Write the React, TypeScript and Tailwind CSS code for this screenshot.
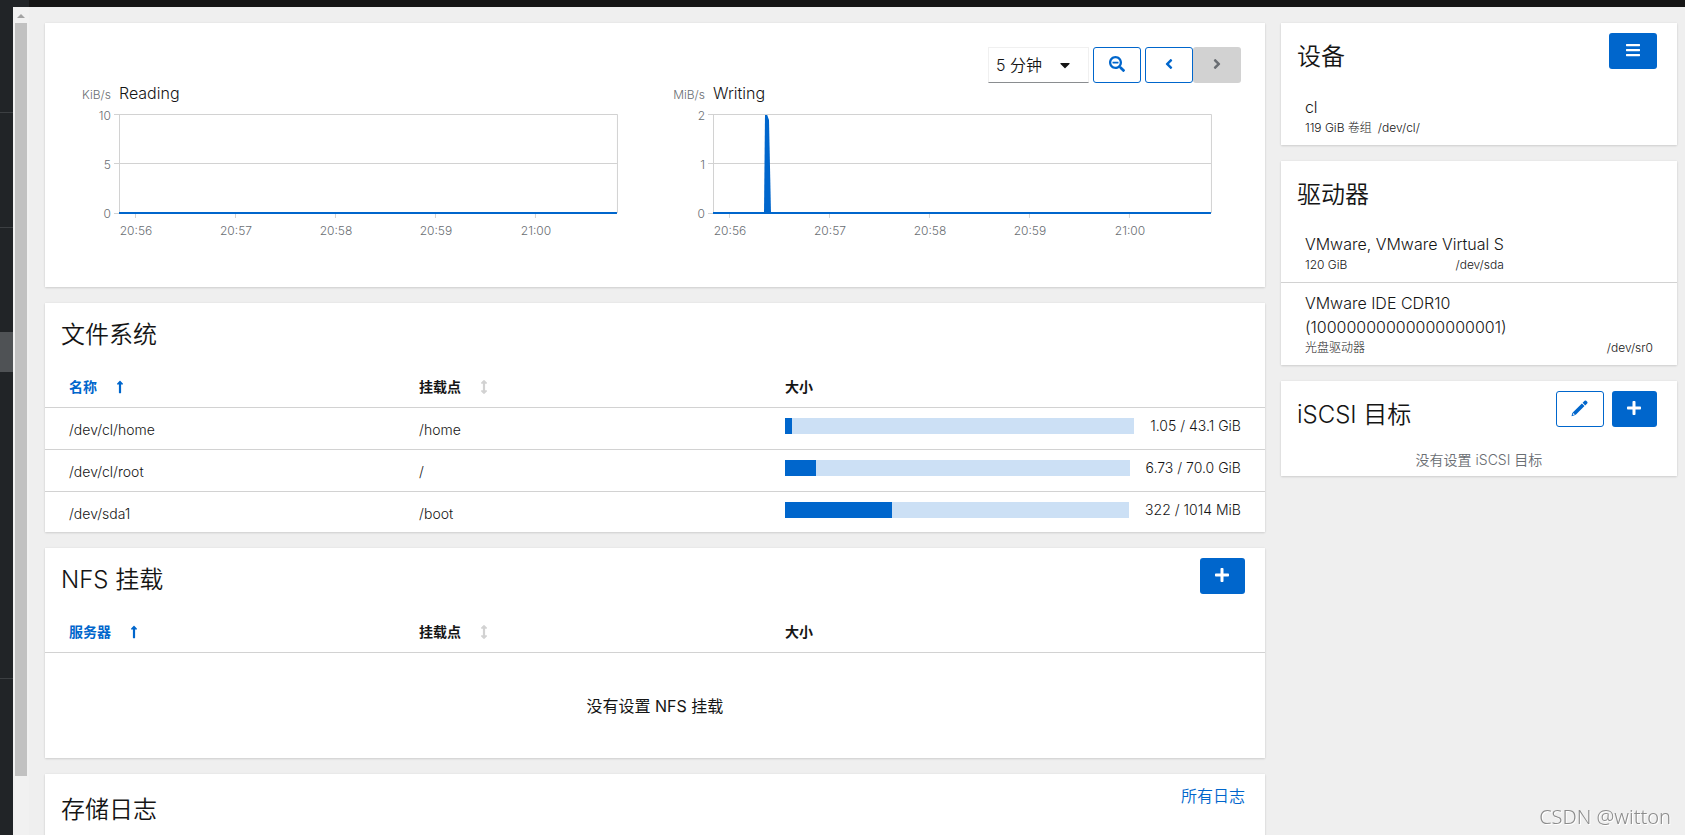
import type { ReactNode } from 'react';
import clsx from 'clsx';
import {
  FaAngleLeft,
  FaAngleRight,
  FaArrowsAltV,
  FaBars,
  FaCaretDown,
  FaLongArrowAltUp,
  FaPlus,
  FaSearchMinus,
} from 'react-icons/fa';

const filesystems = [
  { name: '/dev/cl/home', mount: '/home', size: '1.05 / 43.1 GiB', percent: 2 },
  { name: '/dev/cl/root', mount: '/', size: '6.73 / 70.0 GiB', percent: 9 },
  { name: '/dev/sda1', mount: '/boot', size: '322 / 1014 MiB', percent: 31 },
];

const times = ['20:56', '20:57', '20:58', '20:59', '21:00'];

interface CardProps {
  title?: string;
  titleClass?: string;
  actions?: ReactNode;
  children?: ReactNode;
}

function Card({ title, titleClass = 'my-4', actions, children }: CardProps) {
  return (
    <section className="bg-white shadow-[0_1px_2px_rgba(3,3,3,0.12),0_0_2px_rgba(3,3,3,0.06)]">
      {title && (
        <div className="flex items-start justify-between pl-4 pr-5">
          <h2 className={clsx('text-2xl leading-8', titleClass)}>{title}</h2>
          {actions && <div className="flex gap-2 pb-[18px] pt-[10px]">{actions}</div>}
        </div>
      )}
      {children}
    </section>
  );
}

interface ButtonProps {
  label: string;
  primary?: boolean;
  disabled?: boolean;
  className?: string;
  children: ReactNode;
}

function Button({ label, primary, disabled, className, children }: ButtonProps) {
  return (
    <button
      type="button"
      aria-label={label}
      disabled={disabled}
      className={clsx(
        'flex h-9 items-center justify-center rounded-[3px] pb-0.5 text-base',
        disabled && 'bg-[#d2d2d2] text-[#6a6e73]',
        !disabled && primary && 'cursor-pointer bg-[#0066cc] text-white',
        !disabled && !primary && 'cursor-pointer border border-[#0066cc] bg-white text-[#0066cc]',
        className ?? 'w-12',
      )}
    >
      {children}
    </button>
  );
}

function PencilIcon() {
  return (
    <svg viewBox="0 0 17 17" className="h-[17px] w-[17px]" fill="currentColor">
      <path d="M11.600 2.800L13.600 0.800Q14.400 0 15.200 0.800L16.200 1.800Q17 2.600 16.200 3.400L14.200 5.400z" />
      <path
        fillRule="evenodd"
        d="M10.900 3.500L13.500 6.100L5 14.600Q4.400 15.200 0.500 16.200Q1 12.800 2 12.200zM2.400 13.100L1.700 15.100L3.900 14.400z"
      />
    </svg>
  );
}

interface ChartProps {
  title: string;
  unit: string;
  ticks: string[];
  spike?: boolean;
}

function Chart({ title, unit, ticks, spike }: ChartProps) {
  return (
    <svg viewBox="0 0 594 176" className="block w-full" role="img" aria-label={title}>
      <text x="50" y="16" textAnchor="end" className="fill-[#6a6e73] text-xs">
        {unit}
      </text>
      <text x="58" y="16" className="fill-[#151515] text-base">
        {title}
      </text>
      <g stroke="#d2d2d2" fill="none">
        <path d="M53 31.5H556.5V130M53 80.5H556M53 130.5H556M58.5 31V130" />
        {times.map((time, i) => (
          <path key={time} d={`M${74.5 + i * 100} 131v4`} />
        ))}
      </g>
      {ticks.map((tick, i) => (
        <text key={tick} x="50" y={37 + i * 49} textAnchor="end" className="fill-[#6a6e73] text-xs">
          {tick}
        </text>
      ))}
      {times.map((time, i) => (
        <text key={time} x={75 + i * 100} y="152" textAnchor="middle" className="fill-[#6a6e73] text-xs">
          {time}
        </text>
      ))}
      {spike && <path d="M109 130L110 32h2.200L114 37L116 130z" fill="#0066cc" />}
      <path d="M58 130H556" stroke="#0066cc" strokeWidth="2" />
    </svg>
  );
}

function TableHead({ first }: { first: string }) {
  return (
    <thead>
      <tr className="h-[41px] border-b border-[#d2d2d2] text-left align-middle text-sm">
        <th className="w-[28.7%] pl-6 font-bold text-[#0066cc]">
          <button type="button" className="flex cursor-pointer items-center gap-4">
            {first}
            <FaLongArrowAltUp size={14} />
          </button>
        </th>
        <th className="w-[30%] pl-6 font-bold">
          <button type="button" className="flex cursor-pointer items-center gap-4">
            挂载点
            <FaArrowsAltV size={14} className="text-[#d2d2d2]" />
          </button>
        </th>
        <th className="pl-6 font-bold">大小</th>
      </tr>
    </thead>
  );
}

interface DeviceProps {
  name: string;
  info: string;
  path: string;
}

function Device({ name, info, path }: DeviceProps) {
  return (
    <li className="border-b border-[#d2d2d2] px-6 py-2 last:border-b-0">
      <div className="w-fit">
        <div className="text-base leading-6">{name}</div>
        <div className="flex justify-between gap-1.5 text-xs leading-[18px]">
          <span>{info}</span>
          <span>{path}</span>
        </div>
      </div>
    </li>
  );
}

export default function App() {
  return (
    <div className="flex h-screen flex-col overflow-hidden bg-[#efefef] font-['Inter','Noto_Sans_CJK_SC',sans-serif] font-[350] text-[#151515]">
      <header className="flex h-[7px] shrink-0 bg-[#151515]">
        <div className="w-[29px] bg-[#212427]" />
      </header>

      <div className="flex min-h-0 flex-1">
        {/* navigation edge */}
        <nav className="flex w-[13px] shrink-0 flex-col bg-[#212427]">
          <div className="h-[106px] border-b border-[#3c3f42]" />
          <div className="h-[115px] border-b border-[#3c3f42]" />
          <div className="mt-[104px] h-10 bg-[#4f5255]" />
          <div className="h-[307px] border-b border-[#3c3f42]" />
        </nav>

        {/* scrollbar */}
        <div className="flex w-4 shrink-0 flex-col bg-[#f1f1f1] px-0.5">
          <svg viewBox="0 0 12 16" className="h-4 w-3 shrink-0">
            <path d="M2 11L6 7L10 11z" fill="#a3a3a3" />
          </svg>
          <div className="h-[91%] bg-[#c1c1c1]" />
        </div>

        <main className="grid flex-1 grid-cols-[minmax(0,77fr)_minmax(0,25fr)] items-start gap-4 pl-4 pr-2 pt-4">
          <div className="flex flex-col gap-4">
            <Card>
              <div className="flex justify-end gap-1 pr-6 pt-6">
                <div className="relative">
                  <select
                    aria-label="时间范围"
                    className="h-9 w-[101px] appearance-none border border-[#f0f0f0] border-b-[#8a8d90] bg-white pl-[7px] text-base"
                  >
                    <option>5 分钟</option>
                    <option>1 小时</option>
                  </select>
                  <FaCaretDown size={16} className="pointer-events-none absolute right-4 top-[10px]" />
                </div>
                <Button label="缩小">
                  <FaSearchMinus />
                </Button>
                <div className="flex">
                  <Button label="向前">
                    <FaAngleLeft />
                  </Button>
                  <Button label="向后" disabled>
                    <FaAngleRight />
                  </Button>
                </div>
              </div>
              <div className="grid grid-cols-2 px-4 pb-7 font-light">
                <Chart title="Reading" unit="KiB/s" ticks={['10', '5', '0']} />
                <Chart title="Writing" unit="MiB/s" ticks={['2', '1', '0']} spike />
              </div>
            </Card>

            <Card title="文件系统">
              <table className="w-full table-fixed border-collapse text-sm">
                <TableHead first="名称" />
                <tbody className="font-light">
                  {filesystems.map((fs) => (
                    <tr
                      key={fs.name}
                      className="h-[42px] border-b border-[#d2d2d2] align-top last:h-10 last:border-b-0"
                    >
                      <td className="pl-6 pt-3">{fs.name}</td>
                      <td className="pl-6 pt-3">{fs.mount}</td>
                      <td className="pl-6 pr-6 pt-2">
                        <div className="flex items-center gap-4">
                          <div
                            role="progressbar"
                            aria-label={fs.name}
                            aria-valuenow={fs.percent}
                            className="h-4 flex-1 bg-[#cce0f5]"
                          >
                            <div className="h-full bg-[#0066cc]" style={{ width: `${fs.percent}%` }} />
                          </div>
                          <span>{fs.size}</span>
                        </div>
                      </td>
                    </tr>
                  ))}
                </tbody>
              </table>
            </Card>

            <Card
              title="NFS 挂载"
              actions={
                <Button label="添加" primary className="w-[45px]">
                  <FaPlus />
                </Button>
              }
            >
              <table className="w-full table-fixed border-collapse">
                <TableHead first="服务器" />
                <tbody>
                  <tr className="h-[105px] text-center align-middle">
                    <td colSpan={3} className="text-base font-normal">
                      没有设置 NFS 挂载
                    </td>
                  </tr>
                </tbody>
              </table>
            </Card>

            <Card
              title="存储日志"
              titleClass="my-5"
              actions={
                <a href="#logs" className="text-base leading-6 text-[#0066cc]">
                  所有日志
                </a>
              }
            >
              <div className="h-10" />
            </Card>
          </div>

          <div className="flex flex-col gap-4">
            <Card
              title="设备"
              titleClass="mt-[18px]"
              actions={
                <Button label="菜单" primary>
                  <FaBars />
                </Button>
              }
            >
              <ul className="font-light">
                <Device name="cl" info="119 GiB 卷组" path="/dev/cl/" />
              </ul>
            </Card>

            <Card title="驱动器" titleClass="mt-[18px] mb-[13px]">
              <ul className="font-light">
                <Device name="VMware, VMware Virtual S" info="120 GiB" path="/dev/sda" />
                <Device
                  name="VMware IDE CDR10 (10000000000000000001)"
                  info="光盘驱动器"
                  path="/dev/sr0"
                />
              </ul>
            </Card>

            <Card
              title="iSCSI 目标"
              titleClass="mt-[18px]"
              actions={
                <>
                  <Button label="编辑">
                    <PencilIcon />
                  </Button>
                  <Button label="添加" primary className="w-[45px]">
                    <FaPlus />
                  </Button>
                </>
              }
            >
              <p className="pb-1.5 pt-1 text-center text-sm leading-[21px] text-[#6a6e73]">没有设置 iSCSI 目标</p>
            </Card>
          </div>
        </main>
      </div>

      <div className="pointer-events-none fixed bottom-1 right-[14px] font-['Noto_Sans',sans-serif] text-xl font-light text-[#8c8c8c] [text-shadow:1px_1px_0_#ffffff]">
        CSDN @witton
      </div>
    </div>
  );
}
